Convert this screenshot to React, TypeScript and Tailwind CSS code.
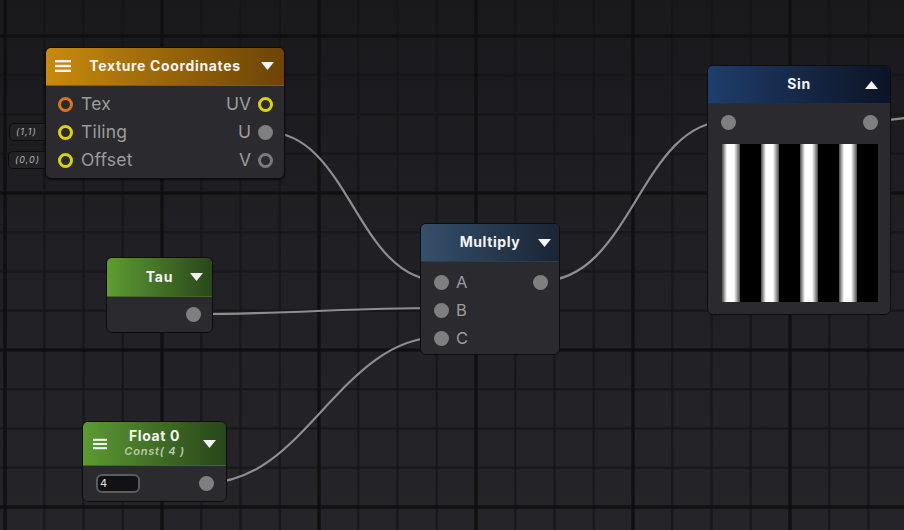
import React from 'react';

const FONT = "font-['Inter','Liberation_Sans',sans-serif]";

function Hamburger({ w = 16 }: { w?: number }) {
  return (
    <svg width={w} height="14" viewBox="0 0 16 14">
      <rect x="0" y="1" width="16" height="2.4" fill="#f2f2f2" />
      <rect x="0" y="5.8" width="16" height="2.4" fill="#f2f2f2" />
      <rect x="0" y="10.6" width="16" height="2.4" fill="#f2f2f2" />
    </svg>
  );
}

function Caret({ up = false }: { up?: boolean }) {
  return (
    <svg width="13" height="8" viewBox="0 0 13 8">
      {up ? <polygon points="0,8 13,8 6.5,0" fill="#f4f4f4" /> : <polygon points="0,0 13,0 6.5,8" fill="#f4f4f4" />}
    </svg>
  );
}

function Port({ kind }: { kind: 'gray' | 'yellow' | 'orange' | 'ring' }) {
  if (kind === 'gray') return <span className="block w-[15px] h-[15px] rounded-full bg-[#7f7f80]" />;
  if (kind === 'yellow') return <span className="block w-[15px] h-[15px] rounded-full border-[3px] border-[#dcd400] bg-[#2b2b2f]" />;
  if (kind === 'orange') return <span className="block w-[15px] h-[15px] rounded-full border-[3px] border-[#dc7412] bg-[#2b2b2f]" />;
  return <span className="block w-[15px] h-[15px] rounded-full border-[3px] border-[#7a7a7b] bg-[#2b2b2f]" />;
}

function Grid() {
  return (
    <svg className="absolute inset-0" width="904" height="530">
      <defs>
        <linearGradient id="bg" x1="0" y1="0" x2="0" y2="1">
          <stop offset="0" stopColor="#19191c" />
          <stop offset="0.45" stopColor="#202024" />
          <stop offset="1" stopColor="#252529" />
        </linearGradient>
        <pattern id="grid" x="5" y="36" width="157" height="157" patternUnits="userSpaceOnUse">
          <g stroke="#141416" strokeOpacity="0.7" strokeWidth="2.6">
            <line x1="39.25" y1="0" x2="39.25" y2="157" />
            <line x1="78.5" y1="0" x2="78.5" y2="157" />
            <line x1="117.75" y1="0" x2="117.75" y2="157" />
            <line x1="0" y1="39.25" x2="157" y2="39.25" />
            <line x1="0" y1="78.5" x2="157" y2="78.5" />
            <line x1="0" y1="117.75" x2="157" y2="117.75" />
          </g>
          <g stroke="#0e0e10" strokeOpacity="0.9" strokeWidth="3.6">
            <line x1="0" y1="0" x2="0" y2="157" />
            <line x1="157" y1="0" x2="157" y2="157" />
            <line x1="0" y1="0" x2="157" y2="0" />
            <line x1="0" y1="157" x2="157" y2="157" />
          </g>
        </pattern>
      </defs>
      <rect width="904" height="530" fill="url(#bg)" />
      <rect width="904" height="530" fill="url(#grid)" />
    </svg>
  );
}

function Wires() {
  const wires = [
    'M266 132 C 350 132, 356 281, 441 281',
    'M194 314 C 300 314, 335 308, 441 308',
    'M206 483 C 305 483, 340 337, 441 337',
    'M541 281 C 632 281, 640 121, 728 121',
    'M871 121 C 885 121, 895 119, 906 118',
  ];
  return (
    <svg className="absolute inset-0" width="904" height="530">
      {wires.map((d, i) => (
        <path key={i} d={d} fill="none" stroke="#8e8e90" strokeWidth="2.2" strokeLinecap="round" />
      ))}
    </svg>
  );
}

function Pill({ text, className }: { text: string; className: string }) {
  return (
    <div className={`absolute h-[18px] rounded-[5px] bg-[#222225] border border-[#0c0c0d] flex items-center pl-[6px] ${className}`}>
      <span className="text-[9px] italic text-[#b4b4b4] tracking-[1px]">{text}</span>
    </div>
  );
}

export default function App() {
  return (
    <div className={`relative w-[904px] h-[530px] overflow-hidden bg-[#202024] ${FONT}`}>
      <Grid />
      <Wires />

      <Pill text="(1,1)" className="left-[9px] top-[123px] w-[44px]" />
      <Pill text="(0,0)" className="left-[8px] top-[151px] w-[44px]" />

      {/* Texture Coordinates */}
      <div className="absolute left-[45px] top-[47px] w-[240px] rounded-[6px] border border-[#0d0d0e] bg-[#2b2b2f] shadow-[0_1px_2px_rgba(0,0,0,0.6)]">
        <div className="relative h-[38px] pb-[3px] rounded-t-[5px] bg-gradient-to-r from-[#c98b0d] to-[#6c4406] border-b border-[#8a5a08] flex items-center justify-center">
          <div className="absolute left-[9px] top-[11px]"><Hamburger /></div>
          <span className="text-[14px] font-bold text-[#f4f4f4] tracking-[0.65px]">Texture Coordinates</span>
          <div className="absolute right-[10px] top-[14px]"><Caret /></div>
        </div>
        <div className="pt-[4px] pb-[4px] pl-[12px] pr-[11px]">
          {[
            ['Tex', 'orange', 'UV', 'yellow'],
            ['Tiling', 'yellow', 'U', 'gray'],
            ['Offset', 'yellow', 'V', 'ring'],
          ].map(([l, lk, r, rk]) => (
            <div key={l} className="h-[28px] flex items-center justify-between">
              <div className="flex items-center gap-[8px]">
                <Port kind={lk as 'orange'} />
                <span className="text-[17.5px] text-[#9c9c9e] leading-none tracking-[0.2px]">{l}</span>
              </div>
              <div className="flex items-center gap-[7px]">
                <span className="text-[17.5px] text-[#9c9c9e] leading-none">{r}</span>
                <Port kind={rk as 'gray'} />
              </div>
            </div>
          ))}
        </div>
      </div>

      {/* Tau */}
      <div className="absolute left-[106px] top-[257px] w-[107px] rounded-[6px] border border-[#0d0d0e] bg-[#2b2b2f]">
        <div className="relative h-[39px] pb-[2px] rounded-t-[5px] bg-gradient-to-r from-[#5e9d32] to-[#2a481a] border-b border-[#3f6a22] flex items-center justify-center">
          <span className="text-[14px] font-bold text-[#f4f4f4] tracking-[0.8px]">Tau</span>
          <div className="absolute right-[9px] top-[15px]"><Caret /></div>
        </div>
        <div className="h-[35px] flex items-center justify-end pr-[11px]">
          <Port kind="gray" />
        </div>
      </div>

      {/* Float 0 */}
      <div className="absolute left-[82px] top-[421px] w-[145px] rounded-[6px] border border-[#0d0d0e] bg-[#2b2b2f]">
        <div className="relative h-[44px] pb-[2px] rounded-t-[5px] bg-gradient-to-r from-[#5c9b31] to-[#29461a] border-b border-[#3f6a22] flex flex-col items-center justify-center">
          <div className="absolute left-[10px] top-[15px]"><Hamburger w={14} /></div>
          <span className="text-[14px] font-bold text-[#f4f4f4] leading-[16px] tracking-[0.6px]">Float 0</span>
          <span className="text-[11px] italic font-semibold text-[#b9c9ad] leading-[14px] tracking-[0.8px]">Const( 4 )</span>
          <div className="absolute right-[10px] top-[18px]"><Caret /></div>
        </div>
        <div className="h-[35px] flex items-center justify-between pl-[13px] pr-[12px]">
          <div className="w-[44px] h-[19px] rounded-[6px] bg-[#121214] border-2 border-[#5c5c5e] flex items-center pl-[2px]">
            <span className="text-[11px] text-[#e4e4e4]">4</span>
          </div>
          <Port kind="gray" />
        </div>
      </div>

      {/* Multiply */}
      <div className="absolute left-[420px] top-[223px] w-[140px] rounded-[6px] border border-[#0d0d0e] bg-[#2b2b2f]">
        <div className="relative h-[38px] pb-[2px] rounded-t-[5px] bg-gradient-to-r from-[#35506c] to-[#1a2535] border-b border-[#2a3c52] flex items-center justify-center">
          <span className="text-[14px] font-bold text-[#f4f4f4] tracking-[0.6px]">Multiply</span>
          <div className="absolute right-[8px] top-[15px]"><Caret /></div>
        </div>
        <div className="pt-[6px] pb-[2px] pl-[13px] pr-[11px]">
          {['A', 'B', 'C'].map((l, i) => (
            <div key={l} className="h-[28px] flex items-center justify-between">
              <div className="flex items-center gap-[7px]">
                <Port kind="gray" />
                <span className="text-[16.5px] text-[#9c9c9e] leading-none">{l}</span>
              </div>
              {i === 0 && <Port kind="gray" />}
            </div>
          ))}
        </div>
      </div>

      {/* Sin */}
      <div className="absolute left-[707px] top-[65px] w-[184px] rounded-[6px] border border-[#0d0d0e] bg-[#2b2b2f]">
        <div className="relative h-[38px] pb-[3px] rounded-t-[5px] bg-gradient-to-r from-[#1e3e6c] to-[#0c1426] border-b border-[#173056] flex items-center justify-center">
          <span className="text-[14px] font-bold text-[#f4f4f4] tracking-[0.6px]">Sin</span>
          <div className="absolute right-[12px] top-[15px]"><Caret up /></div>
        </div>
        <div className="pt-[4px] pb-[12px]">
          <div className="h-[28px] flex items-center justify-between pl-[13px] pr-[12px]">
            <Port kind="gray" />
            <Port kind="gray" />
          </div>
          <div className="ml-[14px] mt-[8px] w-[156px] h-[158px] bg-[repeating-linear-gradient(90deg,#4a4a4a_0px,#ffffff_5px,#ffffff_12px,#5a5a5a_17.5px,#000000_18.5px,#000000_39px)]" />
        </div>
      </div>
    </div>
  );
}
